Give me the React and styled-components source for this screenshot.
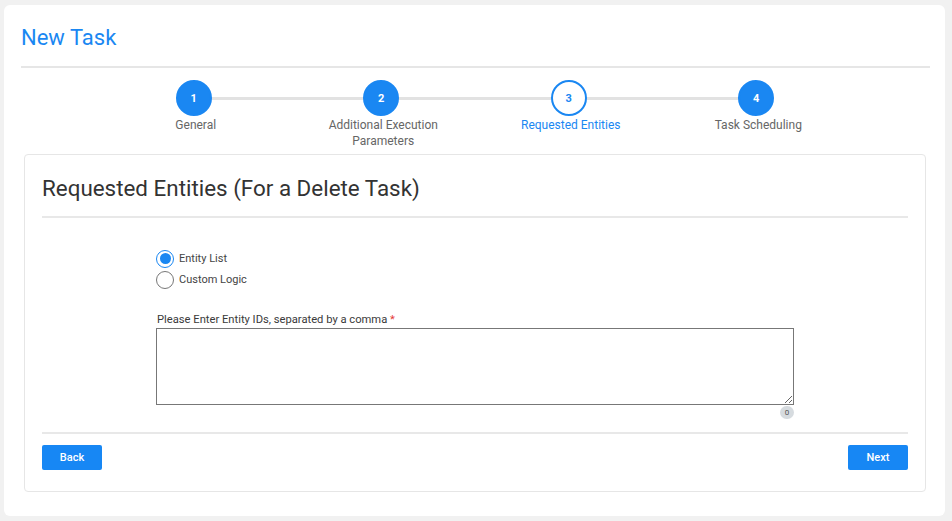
import React, { useState } from 'react';
import styled, { createGlobalStyle } from 'styled-components';

const GlobalStyle = createGlobalStyle`
  body {
    margin: 0;
    background: #f1f1f1;
    font-family: Roboto, 'Liberation Sans', sans-serif;
  }
`;

const BLUE = '#1a87f2';

const Page = styled.div`
  padding: 5px 7px 5px 4px;
`;

const Card = styled.div`
  background: #fff;
  border-radius: 6px;
  height: 511px;
  box-sizing: border-box;
  display: flex;
  flex-direction: column;
`;

const Header = styled.div`
  margin: 0 15px 0 17px;
  padding: 20px 0 15px;
  border-bottom: 2px solid #e6e6e6;
`;

const Title = styled.h1`
  margin: 0;
  font-size: 22px;
  line-height: 26px;
  font-weight: 400;
  color: ${BLUE};
`;

const Stepper = styled.div`
  display: grid;
  grid-template-columns: repeat(4, 1fr);
  width: 750px;
  margin: 12px auto 5px;
  padding-left: 1px;
`;

const Step = styled.div`
  position: relative;
  display: flex;
  flex-direction: column;
  align-items: center;

  &:not(:first-child)::before {
    content: '';
    position: absolute;
    top: 17px;
    left: -50%;
    right: 50%;
    height: 3px;
    background: #e2e2e2;
  }
`;

const Circle = styled.div`
  position: relative;
  z-index: 1;
  width: 36px;
  height: 36px;
  box-sizing: border-box;
  border-radius: 50%;
  display: flex;
  align-items: center;
  justify-content: center;
  font-size: 11px;
  font-weight: 700;
  background: ${p => (p.$active ? '#fff' : BLUE)};
  color: ${p => (p.$active ? BLUE : '#fff')};
  border: 2px solid ${BLUE};
`;

const StepLabel = styled.div`
  margin: 1px 0 0 4px;
  font-size: 12px;
  line-height: 16px;
  text-align: center;
  color: ${p => (p.$active ? BLUE : '#666')};
  max-width: 130px;
`;

const Panel = styled.div`
  margin: 0 19px 0 20px;
  border: 1px solid #e6e6e6;
  border-radius: 4px;
  padding: 20px 17px 21px;
`;

const PanelTitle = styled.h2`
  margin: 0;
  font-size: 22.4px;
  line-height: 26px;
  font-weight: 400;
  color: #333;
  padding-bottom: 15px;
  border-bottom: 2px solid #e8e8e8;
`;

const Form = styled.div`
  width: 638px;
  margin: 30px auto 0;
`;

const RadioRow = styled.label`
  display: flex;
  align-items: center;
  height: 21px;
  gap: 5px;
  font-size: 11px;
  color: #444;
  cursor: pointer;
`;

const RadioDot = styled.span`
  width: 18px;
  height: 18px;
  box-sizing: border-box;
  border-radius: 50%;
  border: ${p => (p.$checked ? `1.5px solid ${BLUE}` : '1px solid #777')};
  display: flex;
  align-items: center;
  justify-content: center;

  &::after {
    content: '';
    width: 11px;
    height: 11px;
    border-radius: 50%;
    background: ${p => (p.$checked ? BLUE : 'transparent')};
  }
`;

const FieldLabel = styled.div`
  margin: 23px 0 1px 1px;
  font-size: 11.2px;
  line-height: 14px;
  color: #3a3a3a;
`;

const Required = styled.span`
  color: #e53935;
`;

const TextArea = styled.textarea`
  display: block;
  width: 100%;
  height: 77px;
  box-sizing: border-box;
  border: 1px solid #777;
  border-radius: 0;
  font-family: Roboto, 'Liberation Sans', sans-serif;
  font-size: 12px;
  outline: none;
`;

const CounterRow = styled.div`
  display: flex;
  justify-content: flex-end;
  margin-top: 1px;
`;

const Counter = styled.span`
  width: 14px;
  height: 13px;
  border-radius: 7px;
  background: #d6dbdf;
  color: #555;
  font-size: 8px;
  display: flex;
  align-items: center;
  justify-content: center;
`;

const Footer = styled.div`
  margin-top: 13px;
  padding-top: 11px;
  border-top: 2px solid #e8e8e8;
  display: flex;
  justify-content: space-between;
`;

const Button = styled.button`
  width: 60px;
  height: 25px;
  border: none;
  border-radius: 2px;
  background: #1787f4;
  color: #fff;
  font-family: Roboto, 'Liberation Sans', sans-serif;
  font-size: 11px;
  font-weight: 500;
  cursor: pointer;
`;

const steps = [
  { n: 1, label: 'General' },
  { n: 2, label: 'Additional Execution Parameters' },
  { n: 3, label: 'Requested Entities', active: true },
  { n: 4, label: 'Task Scheduling' },
];

export default function App() {
  const [mode, setMode] = useState('list');
  const [ids, setIds] = useState('');

  return (
    <Page>
      <GlobalStyle />
      <Card>
        <Header>
          <Title>New Task</Title>
        </Header>
        <Stepper>
          {steps.map(s => (
            <Step key={s.n}>
              <Circle $active={s.active}>{s.n}</Circle>
              <StepLabel $active={s.active}>{s.label}</StepLabel>
            </Step>
          ))}
        </Stepper>
        <Panel>
          <PanelTitle>Requested Entities (For a Delete Task)</PanelTitle>
          <Form>
            <RadioRow onClick={() => setMode('list')}>
              <RadioDot $checked={mode === 'list'} />
              Entity List
            </RadioRow>
            <RadioRow onClick={() => setMode('custom')}>
              <RadioDot $checked={mode === 'custom'} />
              Custom Logic
            </RadioRow>
            <FieldLabel>
              Please Enter Entity IDs, separated by a comma <Required>*</Required>
            </FieldLabel>
            <TextArea value={ids} onChange={e => setIds(e.target.value)} />
            <CounterRow>
              <Counter>{ids.length}</Counter>
            </CounterRow>
          </Form>
          <Footer>
            <Button>Back</Button>
            <Button>Next</Button>
          </Footer>
        </Panel>
      </Card>
    </Page>
  );
}
